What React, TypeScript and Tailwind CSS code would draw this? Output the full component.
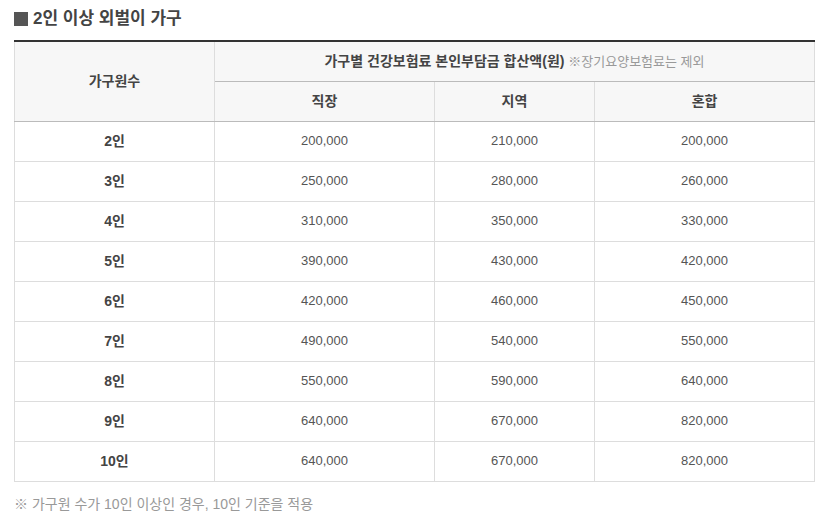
const rows: [string, string, string, string][] = [
  ["2인", "200,000", "210,000", "200,000"],
  ["3인", "250,000", "280,000", "260,000"],
  ["4인", "310,000", "350,000", "330,000"],
  ["5인", "390,000", "430,000", "420,000"],
  ["6인", "420,000", "460,000", "450,000"],
  ["7인", "490,000", "540,000", "550,000"],
  ["8인", "550,000", "590,000", "640,000"],
  ["9인", "640,000", "670,000", "820,000"],
  ["10인", "640,000", "670,000", "820,000"],
];

const font = { fontFamily: '"Liberation Sans", "Noto Sans CJK KR", sans-serif' };

export default function App() {
  return (
    <div className="bg-white w-[823px] h-[519px] px-[14px] pt-[7px] text-[#333]" style={font}>
      <h3 className="text-[17px] font-bold leading-[24px] text-[#444] flex items-center gap-[5px]">
        <span className="inline-block w-[14px] h-[14px] bg-[#555]"></span>
        2인 이상 외벌이 가구
      </h3>

      <table className="mt-[9px] w-[800px] border-collapse table-fixed text-[14px] text-center">
        <colgroup>
          <col className="w-[200px]" />
          <col className="w-[220px]" />
          <col className="w-[160px]" />
          <col className="w-[220px]" />
        </colgroup>
        <thead>
          <tr className="h-[40px] bg-[#f7f7f7] border-t-2 border-t-[#333]">
            <th rowSpan={2} className="font-bold text-[#444] border-l border-r border-[#ddd] border-b border-b-[#bbb]">
              가구원수
            </th>
            <th colSpan={3} className="font-bold text-[#444] border-r border-[#ddd] border-b border-b-[#bbb]">
              가구별 건강보험료 본인부담금 합산액(원){" "}
              <span className="font-normal text-[13px] text-[#999]">※장기요양보험료는 제외</span>
            </th>
          </tr>
          <tr className="h-[40px] bg-[#f7f7f7]">
            <th className="font-bold text-[#444] border-r border-[#ddd] border-b border-b-[#bbb]">직장</th>
            <th className="font-bold text-[#444] border-r border-[#ddd] border-b border-b-[#bbb]">지역</th>
            <th className="font-bold text-[#444] border-r border-[#ddd] border-b border-b-[#bbb]">혼합</th>
          </tr>
        </thead>
        <tbody>
          {rows.map((r) => (
            <tr key={r[0]} className="h-[40px]">
              <td className="font-bold text-[#444] border border-[#ddd]">{r[0]}</td>
              <td className="text-[13px] text-[#555] border border-[#ddd]">{r[1]}</td>
              <td className="text-[13px] text-[#555] border border-[#ddd]">{r[2]}</td>
              <td className="text-[13px] text-[#555] border border-[#ddd]">{r[3]}</td>
            </tr>
          ))}
        </tbody>
      </table>

      <p className="mt-[12px] text-[14px] text-[#999]">※ 가구원 수가 10인 이상인 경우, 10인 기준을 적용</p>
    </div>
  );
}
